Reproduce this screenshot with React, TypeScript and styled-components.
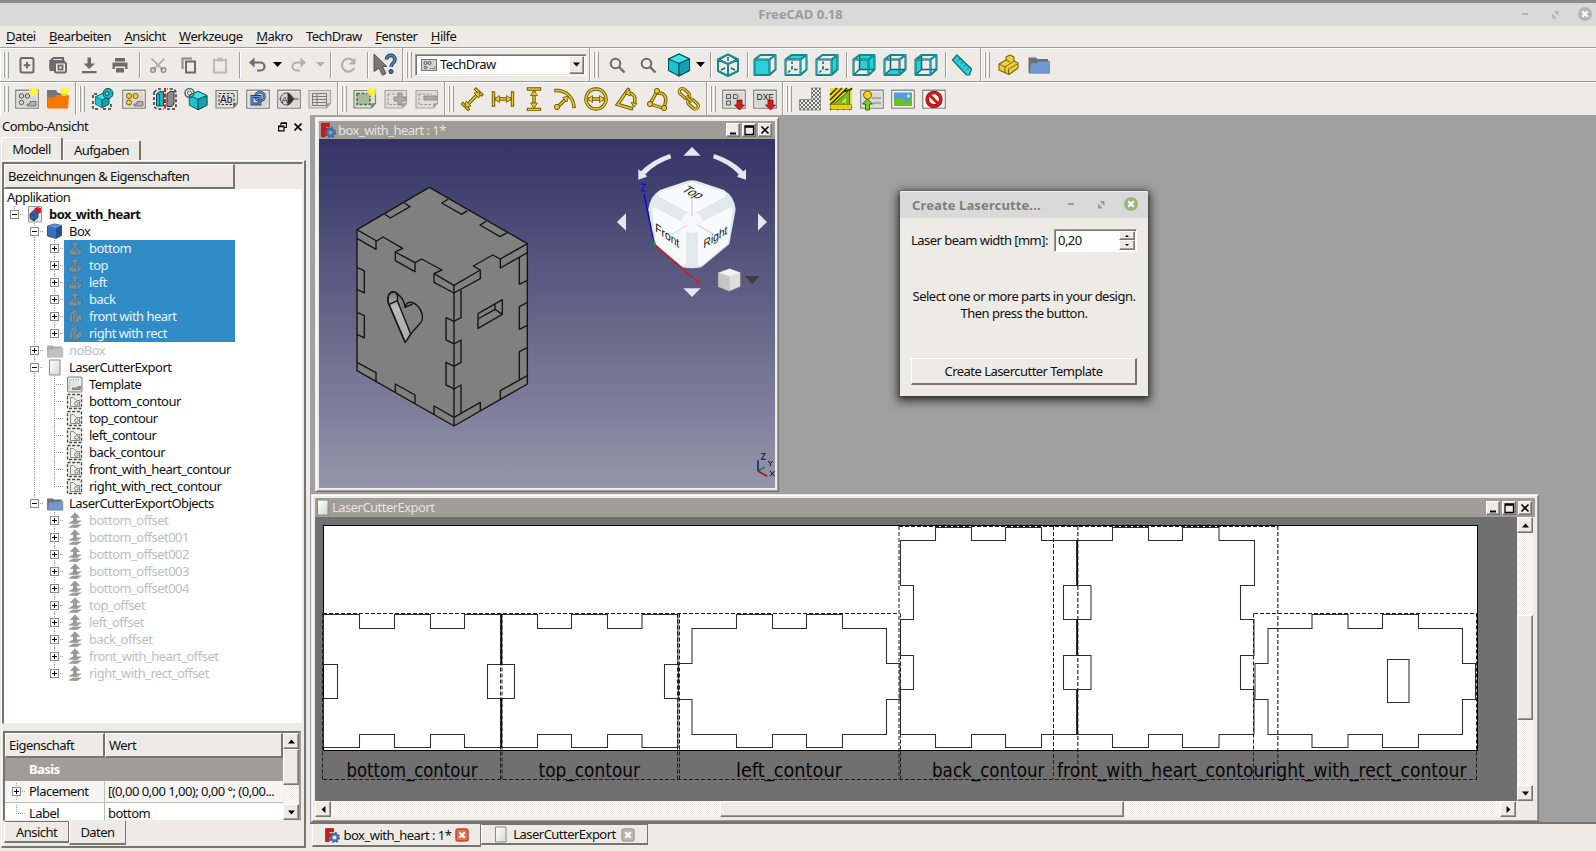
import React from 'react';
import styled, { createGlobalStyle, css } from 'styled-components';

const BG = '#eeebe6';
const MID = '#9f9d98';
const DARK = '#77756f';

const Global = createGlobalStyle`
  *{box-sizing:border-box}
  body{margin:0;overflow:hidden;background:${BG}}
`;

const Shell = styled.div`
  width:1596px;height:851px;display:flex;flex-direction:column;background:${BG};
  font-family:"Noto Sans",sans-serif;font-size:13px;letter-spacing:-.53px;line-height:17px;color:#101010;white-space:nowrap;overflow:hidden;
`;
const TitleBar = styled.div`
  height:26px;flex:none;background:#d9d9d9;border-top:3px solid #8d8d8d;display:grid;letter-spacing:0;
  grid-template-columns:1fr auto 1fr;align-items:center;font-weight:700;color:#9c9c9c;padding-right:2px;padding-left:7px;
`;
const WinCtl = styled.div`
  display:flex;justify-self:end;align-items:center;
`;
const MenuBar = styled.div`
  height:21px;flex:none;display:flex;gap:13.500px;padding:0 0 1px 6px;align-items:center;
  u{text-underline-offset:2px}
`;

const Toolbars = styled.div`
  height:34px;flex:none;display:flex;border-top:1px solid ${MID};box-shadow:inset 0 1px 0 #fff;
`;
const Bar = styled.div<{ $w: number; $last?: boolean }>`
  width:${p => p.$w}px;display:flex;align-items:center;padding:0 0 0 3px;
  ${p => !p.$last && css`border-right:1px solid ${MID};`}
  box-shadow:inset 1px 1px 0 #fff;
`;
const Grip = styled.div`
  width:6px;height:26px;flex:none;margin-right:3px;border:solid ${MID};border-width:0 1px;
  border-left-color:#fff;
  background:linear-gradient(90deg,${MID} 0 1px,${BG} 1px 2px,#fff 2px 3px,${BG} 3px);
`;
const Slot = styled.div<{ $w?: number }>`
  width:${p => p.$w ?? 31}px;flex:none;display:flex;align-items:center;padding-left:3px;
  svg{flex:none;display:block}
`;
const Sep = styled.div<{ $w?: number }>`
  width:${p => p.$w ?? 7}px;height:26px;flex:none;
  &::after{content:'';display:block;width:2px;height:26px;margin-left:3px;background:linear-gradient(90deg,${MID} 50%,#fff 50%)}
`;
const ArrowGap = styled.div<{ $w: number }>`margin-left:${p => p.$w}px;`;
const Combo = styled.div`
  width:172px;height:22px;flex:none;background:#fff;border:1px solid ${MID};border-right-color:#fff;border-bottom-color:#fff;
  box-shadow:inset 1px 1px 0 ${DARK},inset -1px -1px 0 ${BG};display:flex;align-items:center;padding:2px 2px 2px 5px;
  >span{flex:1;margin-left:3px}
`;
const Btn = styled.div<{ $w: number; $h: number }>`
  width:${p => p.$w}px;height:${p => p.$h}px;flex:none;background:${BG};border:1px solid #fff;
  border-right-color:${DARK};border-bottom-color:${DARK};box-shadow:inset -1px -1px 0 ${MID};
  display:flex;align-items:center;justify-content:center;
`;

const Body = styled.div`flex:1;display:flex;min-height:0;`;
const Dock = styled.div`width:310px;flex:none;display:flex;flex-direction:column;padding-right:4px;`;
const DockTitle = styled.div`
  height:23px;flex:none;display:flex;align-items:center;padding:0 4px 0 2px;>span{flex:1}
  svg+svg{margin-left:7px}
`;
const TabRow = styled.div`height:22px;flex:none;display:flex;align-items:flex-end;padding-left:1px;`;
const Tab = styled.div<{ $w: number; $h: number }>`
  width:${p => p.$w}px;height:${p => p.$h}px;display:flex;align-items:center;justify-content:center;
  border:1px solid #fff;border-right:2px solid ${DARK};border-bottom:0;border-radius:2px 2px 0 0;
`;
const Pane = styled.div`
  flex:1;min-height:0;border:solid #fff;border-width:1px 0 0 1px;border-right:2px solid ${DARK};border-bottom:2px solid ${DARK};
  margin:0 0 3px 1px;padding:1px 1px 0 0;display:flex;flex-direction:column;
`;
const Tree = styled.div`
  height:562px;flex:none;background:#fff;border:2px solid ${DARK};border-right:1px solid ${BG};border-bottom:1px solid ${BG};
`;
const TreeHead = styled.div`
  height:25px;background:${BG};display:flex;
`;
const HeadCell = styled.div<{ $w: number }>`
  width:${p => p.$w}px;flex:none;border:1px solid #fff;border-right:2px solid ${DARK};border-bottom:2px solid ${DARK};
  padding:0 0 0 3px;display:flex;align-items:center;
`;
const Row = styled.div`height:17px;display:flex;`;
const Cell = styled.div<{ $k: string }>`
  width:20px;height:17px;flex:none;display:grid;place-items:center;
  ${p => {
    const v = (h: string) => `repeating-linear-gradient(180deg,#9c9c9c 0 1px,transparent 1px 2px) 10px 0/1px ${h} no-repeat`;
    const hz = 'repeating-linear-gradient(90deg,#9c9c9c 0 1px,transparent 1px 2px) 10px 8px/9px 1px no-repeat';
    if (p.$k === 'v') return `background:${v('17px')};`;
    if (p.$k === 't') return `background:${v('17px')},${hz};`;
    if (p.$k === 'l') return `background:${v('9px')},${hz};`;
    return '';
  }}
`;
const Expander = styled.i<{ $open?: boolean }>`
  width:9px;height:9px;border:1px solid #8a8a8a;display:block;margin-left:1px;
  background:linear-gradient(#000,#000) 1px 3px/5px 1px no-repeat,
    ${p => (p.$open ? '' : 'linear-gradient(#000,#000) 3px 1px/1px 5px no-repeat,')} #fff;
`;
const Item = styled.div<{ $sel?: boolean; $dim?: boolean; $bold?: boolean }>`
  height:17px;display:flex;align-items:center;padding-left:2px;
  svg{margin-right:5px;flex:none}
  ${p => p.$sel && css`background:#308cc6;color:#e9f3fa;width:171px;`}
  ${p => p.$dim && css`color:#bebebe;`}
  ${p => p.$bold && css`font-weight:700;`}
`;
const Nudge = styled.i`width:2px;flex:none;`;
const Props = styled.div`
  margin:7px 2px 0 1px;flex:none;height:90px;border:2px solid ${DARK};border-right-color:${MID};border-bottom:1px solid ${BG};display:flex;overflow:hidden;
`;
const PropTable = styled.div`flex:1;min-width:0;`;
const PropRow = styled.div<{ $h: number; $bg?: string }>`
  height:${p => p.$h}px;display:flex;background:${p => p.$bg ?? '#fff'};overflow:hidden;
  border-bottom:1px solid #bdbbb6;
`;
const PropKey = styled.div`
  width:100px;flex:none;display:flex;align-items:center;border-right:1px solid #bdbbb6;padding-left:1px;
  >span{margin-left:3px}
`;
const PropVal = styled.div`display:flex;align-items:center;padding-left:3px;`;
const Basis = styled.div`height:23px;background:${MID};color:#fff;font-weight:700;padding:3px 0 0 24px;`;
const BottomTabs = styled.div`height:24px;flex:none;display:flex;align-items:flex-start;padding-left:2px;`;
const BTab = styled.div<{ $w: number; $h: number; $on?: boolean; $gap?: number }>`
  width:${p => p.$w}px;height:${p => p.$h}px;display:flex;align-items:center;justify-content:center;gap:${p => p.$gap ?? 4}px;
  border-left:1px solid #fff;border-right:1px solid ${DARK};border-bottom:2px solid ${DARK};
  border-top:${p => (p.$on ? '0' : `1px solid ${DARK}`)};background:${BG};padding-top:1px;
`;
const dither = `repeating-conic-gradient(#fff 0 25%,${BG} 0 50%) 0 0/2px 2px`;
const VScroll = styled.div<{ $w: number }>`
  width:${p => p.$w}px;flex:none;display:flex;flex-direction:column;background:${dither};
`;
const HScroll = styled.div`height:16px;width:1201px;flex:none;display:flex;background:${dither};`;
const Spacer = styled.div<{ $n: number }>`flex:${p => p.$n} 0 0;`;

const Mdi = styled.div`flex:1;display:flex;flex-direction:column;min-width:0;`;
const Area = styled.div`flex:1;position:relative;background:#a0a0a0;border-bottom:2px solid ${DARK};`;
const MdiTabs = styled.div`height:27px;flex:none;display:flex;padding-left:2px;`;
const SubWin = styled.div<{ $x: number; $y: number; $w: number; $h: number }>`
  position:absolute;left:${p => p.$x}px;top:${p => p.$y}px;width:${p => p.$w}px;height:${p => p.$h}px;background:${BG};
  border:1px solid ${BG};border-right:1px solid ${DARK};border-bottom:1px solid ${DARK};
  box-shadow:inset 1px 1px 0 #fff,inset -1px -1px 0 ${MID};padding:3px;display:flex;flex-direction:column;
`;
const SubTitle = styled.div<{ $h: number }>`
  height:${p => p.$h}px;flex:none;background:${MID};color:#e6e4df;display:flex;align-items:center;padding:0 3px 0 1px;gap:2px;
  >span{flex:1}
`;
const CtlRow = styled.div`display:flex;gap:2px;`;
const PageView = styled.div`display:flex;height:284px;flex:none;`;
const Canvas = styled.div`width:1202px;height:284px;background:#707070;flex:none;svg{display:block}`;

const Dialog = styled.div`
  position:absolute;left:590px;top:76px;width:248px;height:205px;background:${BG};border-radius:2px 2px 0 0;
  box-shadow:0 3px 10px 3px rgba(0,0,0,.55),0 1px 4px rgba(0,0,0,.5);display:flex;flex-direction:column;
`;
const DialogTitle = styled.div`
  height:27px;flex:none;background:#d9d9d9;border-top:1px solid #f2f2f2;border-radius:2px 2px 0 0;color:#7e7e7e;font-weight:700;
  display:flex;align-items:center;padding:1px 8px 0 12px;letter-spacing:.12px;>span{flex:1}
`;
const DialogBody = styled.div`flex:1;padding:11px 11px 11px;display:flex;flex-direction:column;`;
const Field = styled.div`display:flex;align-items:center;justify-content:space-between;height:23px;`;
const Spin = styled.div`
  width:83px;flex:none;height:23px;background:#fff;border:1px solid ${MID};border-right-color:#fff;border-bottom-color:#fff;
  box-shadow:inset 1px 1px 0 ${DARK};display:flex;padding:1px 1px 1px 3px;align-items:center;>span{flex:1}
`;
const Col = styled.div`display:flex;flex-direction:column;`;
const Hint = styled.div`text-align:center;margin-top:36px;`;
const PushButton = styled.div`
  margin-top:auto;height:27px;border:1px solid #fff;border-right:2px solid ${DARK};border-bottom:2px solid ${DARK};
  display:flex;align-items:center;justify-content:center;
`;

/* ---------- glyphs ---------- */
const Ic = ({ children, s = 24 }: { children: React.ReactNode; s?: number }) => (
  <svg width={s} height={s} viewBox="0 0 24 24" fill="none">{children}</svg>
);
const G = '#6b6b6b';
const LG = '#b3b1ad';
const Tri = ({ d = 'down', c = '#000', s = 9 }: { d?: string; c?: string; s?: number }) => (
  <svg width={s} height={s} viewBox="0 0 9 9" fill={c}>
    <path d={d === 'down' ? 'M0 2h9L4.500 7z' : d === 'up' ? 'M0 7h9L4.500 2z' : d === 'left' ? 'M7 0v9L2 4.500z' : 'M2 0v9L7 4.500z'} />
  </svg>
);
const Min = () => <svg width="12" height="12"><path d="M3 9.500h6" stroke="#000" strokeWidth="2" /></svg>;
const Max = () => <svg width="12" height="12"><path d="M2 2h8.500v8.500H2zM2 3h8.500" stroke="#000" fill="none" strokeWidth="1.300" /></svg>;
const Cls = () => <svg width="12" height="12"><path d="M2.500 2.500l7 7M9.500 2.500l-7 7" stroke="#000" strokeWidth="1.600" /></svg>;

const FcLogo = ({ s = 16 }: { s?: number }) => (
  <svg width={s} height={s} viewBox="0 0 16 16">
    <path d="M1.500 1.500h8v3.200h-4.300v2h3v3h-3v5h-3.700z" fill="#cc1a1a" stroke="#7e1111" strokeWidth=".6" />
    <circle cx="10.500" cy="10.500" r="3.300" fill="none" stroke="#4470ae" strokeWidth="2.400" />
    <circle cx="10.500" cy="10.500" r="4.800" fill="none" stroke="#34588f" strokeWidth="1.400" strokeDasharray="1.900 1.870" />
  </svg>
);
const PageIcon = () => (
  <svg width="14" height="17" viewBox="0 0 14 17"><defs><linearGradient id="pg" x1="0" y1="0" x2="1" y2="1"><stop stopColor="#fff" /><stop offset="1" stopColor="#d3d9d0" /></linearGradient></defs>
    <path d="M1.500 1h10.500v15h-10.500z" fill="url(#pg)" stroke="#8a8a86" /></svg>
);
const Folder = ({ s = 16, a = '#6f9bd1', b = '#6b6f76' }: { s?: number; a?: string; b?: string }) => (
  <svg width={s} height={s} viewBox="0 0 16 16"><path d="M1 3h5l1 1h7v9H1z" fill={b} /><path d="M2.500 6.500h4l1-1H15v8H1.500z" fill={a} stroke={b} strokeWidth=".4" /></svg>
);
const DocIcon = () => (
  <svg width="18" height="17" viewBox="0 0 18 17"><path d="M2.500.5h13v15.500h-13z" fill="#e6e6e6" stroke="#999" /><path d="M4 8l3.500-3.500L12 6v5.500L8 15l-4-2.500z" fill="#3a65a8" stroke="#16294c" strokeWidth=".8" /><path d="M8 15V9l4-3M8 9L4 8" stroke="#16294c" strokeWidth=".6" fill="none" /><path d="M8 3l3-2 4 1v4.500l-3 1.500-1-2.500-3-1z" fill="#d2202c" /></svg>
);
const BlueBox = () => (
  <svg width="18" height="17" viewBox="0 0 18 17"><path d="M1.500 3l7-2 7 1.500v10L10 15.500 1.500 13z" fill="#3b6fb6" stroke="#1b3b69" strokeWidth=".8" /><path d="M10 5v10.500l5.500-3V2.500z" fill="#28528d" /><path d="M1.500 3l7-2 7 1.500L10 5z" fill="#5d90d0" /></svg>
);
const PadIcon = () => (
  <svg width="18" height="17" viewBox="0 0 18 17" stroke="#4d6f86" strokeWidth=".8" fill="#6f91a8"><path d="M2.500 9.500l4-2 9 1v4.500L11 16l-8.500-1.500z" /><path d="M2.500 9.500l8.500 1.500v5M11 11l4.500-2.500" fill="none" /><path d="M7.500 9V5.500H4.500L9 .8l4.500 4.700H10.500V9z" /></svg>
);
const CutIcon = () => (
  <svg width="18" height="17" viewBox="0 0 18 17" stroke="#4d6f86" strokeWidth=".8" fill="#6f91a8"><path d="M3 5l6-4 3 1.500v3L9 9l5-3 2 1.500v4L9 16l-6-3z" /><path d="M3 5l3.500 2v8M6.500 7L12 2.500M9 9v7" fill="none" /></svg>
);
const OffIcon = () => (
  <svg width="18" height="17" viewBox="0 0 18 17" fill="#9b9b98"><path d="M2 15.500l5-3h9l-5 3.500z" /><path d="M2 11.500l5-3h9l-5 3.500z" /><path d="M7.500 9V5.500H4.500L9 .8l4.500 4.700H10.500V9z" stroke="#8a8a88" strokeWidth=".6" /></svg>
);
const TplIcon = () => (
  <svg width="18" height="17" viewBox="0 0 18 17"><rect x="1.500" y="1" width="14.500" height="15" rx="1" fill="#e4e4e2" stroke="#7d7d7b" /><path d="M3.500 3h10.500v9" stroke="#fff" fill="none" /><path d="M3.500 12.500V3.500h10" stroke="#999" strokeDasharray="1 1.500" fill="none" /><path d="M6 14h9v-4h-3l-1 1.500H6z" fill="#8b8b89" /></svg>
);
const ViewIcon = () => (
  <svg width="18" height="17" viewBox="0 0 18 17" fill="none"><rect x="1.500" y="1.500" width="14" height="14" stroke="#444" strokeWidth="1.300" strokeDasharray="3 1.670" fill="#efefed" /><path d="M4.500 4.500v9h9V7.500h-3l-3-3z" stroke="#888" /><circle cx="10.500" cy="10.500" r="1.800" stroke="#777" /></svg>
);

const C1 = '#27d3d8';
const CE = '#0c6f78';
const WireCube = ({ f, r, t, k }: { f?: string; r?: string; t?: string; k?: string }) => (
  <Ic>
    {k && <path d={k} fill={C1} />}
    {f && <path d="M1.500 6.500h15v15.500h-15z" fill={f} />}
    {t && <path d="M1.500 6.500l6-4.500h15l-6 4.500z" fill={t} />}
    {r && <path d="M16.500 6.500l6-4.500v14.500l-6 5.500z" fill={r} />}
    {!f && !k && <path d="M8 8.500v2.500M8 13v3.500M6.500 17.500l-2.500 2M10 16.500h3.500" stroke="#0f6a72" strokeWidth="1.600" />}
    {k && <path d="M7.500 2v14.500h15M7.500 16.500l-6 5.500" stroke="#0f6a72" strokeWidth="1.500" />}
    <path d="M1.500 6.500h15v15.500h-15zM1.500 6.500l6-4.500h15l-6 4.500M22.500 2v14.500l-6 5.500" stroke={CE} strokeWidth="2" strokeLinejoin="round" />
    <path d="M1.500 6.500h15v15.500h-15zM1.500 6.500l6-4.500h15l-6 4.500M22.500 2v14.500l-6 5.500" stroke="#25b5bc" strokeWidth=".7" />
  </Ic>
);
const Glow = () => <><circle cx="18.500" cy="4.500" r="4.800" fill="#fbf34a" opacity=".7" /><circle cx="18.500" cy="4.500" r="2.800" fill="#fffb20" /></>;
const Sheet = ({ children, star, c = '#d6d6d4' }: { children?: React.ReactNode; star?: boolean; c?: string }) => (
  <Ic>
    <rect x=".8" y="3.200" width="22.400" height="17.900" fill={c} stroke="#7b7b79" strokeWidth="1.200" />
    <rect x="2" y="4.500" width="20" height="15.500" stroke="#f4f4f4" strokeWidth=".8" />
    {children}
    {star && <Glow />}
  </Ic>
);
const Note = ({ children, star, dim }: { children?: React.ReactNode; star?: boolean; dim?: boolean }) => (
  <Ic>
    <path d="M1 3.500h21.500v13l-4 4.500H1z" fill={dim ? '#dfddd9' : '#dededc'} stroke={dim ? '#a9a7a3' : '#82827f'} strokeWidth="1.200" />
    <path d="M18 21l.5-4.500 4-.5z" fill={dim ? '#9d9b98' : '#777774'} />
    {children}
    {star && <Glow />}
  </Ic>
);
const YO = '#6d5606';
const YF = '#e8cc2c';
const Gold = ({ d, children }: { d: string; children?: React.ReactNode }) => (
  <Ic>
    <path d={d} stroke={YO} strokeWidth="3.400" strokeLinecap="square" />
    <path d={d} stroke={YF} strokeWidth="1.500" strokeLinecap="square" />
    {children}
  </Ic>
);
const Dot = ({ x, y }: { x: number; y: number }) => <circle cx={x} cy={y} r="2.600" fill={YF} stroke={YO} />;
const Ruler = () => (
  <Ic><path d="M2.500 7l4.500-5 14.500 14-2 6h-3z" fill="#25cfd6" stroke={CE} strokeWidth="1.200" strokeLinejoin="round" /><path d="M10 5.500l-2 2M13 8.500l-2 2M16 11.500l-2 2M19 14.500l-2 2" stroke={CE} /></Ic>
);
const RedArrow = () => <path d="M15 13h5v5h2.500L17.500 23l-5-5H15z" fill="#d81b1b" stroke="#7a0c0c" strokeWidth=".8" />;
const SolidCube = ({ x = 0, y = 0, k = 1 }: { x?: number; y?: number; k?: number }) => (
  <g transform={`translate(${x} ${y}) scale(${k})`} stroke="#0a4f57" strokeWidth="1.100" strokeLinejoin="round">
    <path d="M1.500 6L12 1l10.500 5v11.500L12 23 1.500 17.500z" fill="#1bc3ce" /><path d="M1.500 6L12 1l10.500 5L12 10.500z" fill="#3be5e8" /><path d="M12 10.500V23" />
    <path d="M12 10.500L22.500 6v11.500L12 23z" fill="#12a2b2" />
  </g>
);

const I = {
  neu: <Ic><rect x="5.500" y="5" width="13" height="14.500" rx="1.500" stroke={G} strokeWidth="2" /><path d="M12 9v6.500M8.800 12.200h6.500" stroke={G} strokeWidth="2" /></Ic>,
  open: <Ic><path d="M4.500 16V8l3-3h9.500v3" stroke={G} strokeWidth="2.200" /><path d="M3.500 7h15v2.500H8.500V18H3.500z" fill={G} /><rect x="9" y="9.500" width="11" height="10" rx="1.500" fill={BG} stroke={G} strokeWidth="2" /><rect x="12.500" y="12.500" width="4" height="4" stroke={G} strokeWidth="1.800" /></Ic>,
  save: <Ic><path d="M10.500 4.500h3.500v6h4L12.200 16 6.500 10.500h4zM5 18h14.500v2.300H5z" fill={G} /></Ic>,
  print: <Ic><path d="M7 5h10v3.500H7zM4.500 9.500h15V16h-2.500v-2.500H7V16H4.500zM8 15h8v4.500H8z" fill={G} /></Ic>,
  cut: <Ic><path d="M5.500 5.500L17 17M18.500 5.500L7 17" stroke={LG} strokeWidth="1.800" /><circle cx="7" cy="17" r="2.300" stroke="#8f8d89" strokeWidth="1.500" /><circle cx="17.500" cy="17" r="2.300" stroke="#8f8d89" strokeWidth="1.500" /></Ic>,
  copy: <Ic><path d="M5.500 16V5.500H15" stroke="#8b8986" strokeWidth="2" /><path d="M9 8.500h9v11H9z" stroke={G} strokeWidth="2" /></Ic>,
  paste: <Ic><path d="M6 7h12v12.500H6z" stroke="#bcbab5" strokeWidth="2" /><path d="M9.500 4.500h5v4h-5z" fill="#bcbab5" /></Ic>,
  undo: <Ic><path d="M6 9.500h8.500a4 4 0 0 1 0 8H11" stroke={G} strokeWidth="2.200" /><path d="M3 9.500L8.500 4.500v10z" fill={G} /></Ic>,
  redo: <Ic><path d="M17 9.500H9.500a4 4 0 0 0 0 8H13" stroke={LG} strokeWidth="2.200" /><path d="M19 9.500L13.500 4.500v10z" fill={LG} /></Ic>,
  refresh: <Ic><path d="M17.500 8A6.500 6.500 0 1 0 18.300 15" stroke={LG} strokeWidth="2.200" /><path d="M19.500 4.500v7h-7z" fill={LG} /></Ic>,
  what: <Ic><path d="M1 1l13 12.500h-4.500l3.500 7-3.500 1.700-3.500-7L1 18.500z" fill="#787878" stroke="#3e3e3e" strokeWidth=".8" /><path d="M13.500 6.500c0-5.500 8.500-5.500 8.500 0 0 3.500-4 3.500-4 7.500" stroke="#1d3c68" strokeWidth="3.600" /><path d="M13.500 6.500c0-5.500 8.500-5.500 8.500 0 0 3.500-4 3.500-4 7.500" stroke="#5583bd" strokeWidth="1.700" /><circle cx="18" cy="18.500" r="2.100" fill="#3f6da8" stroke="#1d3c68" /></Ic>,
  mag: <Ic><circle cx="10.500" cy="10.500" r="4.800" stroke={G} strokeWidth="2" /><path d="M14 14l5.500 5.500" stroke={G} strokeWidth="2.400" /></Ic>,
  cube: <Ic><SolidCube /></Ic>,
  iso: <Ic><path d="M12 1.500l10 5V18l-10 5-10-5V6.500zM2 6.500l10 4.500 10-4.500M12 11v12" stroke={CE} strokeWidth="2" strokeLinejoin="round" /><path d="M12 1.500l10 5V18l-10 5-10-5V6.500zM2 6.500l10 4.500 10-4.500M12 11v12" stroke="#25b5bc" strokeWidth=".7" /><path d="M12 4v4M5 17l4-2M19 17l-4-2" stroke="#0f6a72" strokeWidth="1.500" /></Ic>,
  part: <Ic><path d="M3 11l7-4V4l4-2 4 2v4l4 2v5l-9 6.500L3 17z" fill="#f0cf3b" stroke="#7d6108" strokeWidth="1.100" strokeLinejoin="round" /><path d="M3 11l6 3v6M9 14l9-6M10 7l4 2M12.500 21.500V16l9-5" stroke="#7d6108" /></Ic>,
  newpage: <Sheet star><circle cx="6.500" cy="9" r="2.200" stroke="#555" /><circle cx="12.500" cy="9" r="2.200" stroke="#555" /><circle cx="6.500" cy="15.500" r="2.200" stroke="#555" /><path d="M12 19v-2h3v-2.500h6V19z" fill="#b2b2b0" stroke="#666" strokeWidth=".8" /></Sheet>,
  ofolder: <Ic><path d="M1 3h9l2 3h9v14H1z" fill="#767674" /><path d="M1.500 10.500h7l2-2.500H23l-1 13.500H1.500z" fill="#f57900" /><Glow /></Ic>,
  view: <Ic><path d="M2 11V7h6M2 14v8h7M12 22h8v-5" stroke="#333" strokeWidth="1.500" strokeDasharray="3 2" /><SolidCube x={3.5} y={6} k={0.64} /><circle cx="17" cy="6.500" r="5" fill="#16b5c0" stroke="#0a4f57" /><circle cx="16" cy="6.500" r="2" stroke="#0a4f57" fill="#4fd9de" /></Ic>,
  group: <Sheet><circle cx="7" cy="9" r="2.500" fill="#f4d51e" stroke="#7d6108" /><circle cx="13.500" cy="9" r="2.500" fill="#f4d51e" stroke="#7d6108" /><circle cx="7" cy="15.500" r="2.500" fill="#f4d51e" stroke="#7d6108" /><path d="M12 19v-2h3v-2.500h6V19z" fill="#b2b2b0" stroke="#666" strokeWidth=".8" /></Sheet>,
  section: <Ic><path d="M1 5v15M1 5l4-3h5M1 20l3 2h7M14 22h8l1-3V5l-2-3h-7" stroke="#333" strokeWidth="1.500" strokeDasharray="3 2" /><path d="M3.500 7l3-2.500h4V19h-7z" fill="#19b7c3" stroke="#0a4f57" /><path d="M6.500 7.500V19M3.500 7h3" stroke="#0a4f57" /><path d="M14 7l3-2.500h4V17l-2 2.500h-5z" fill="#8b8e8c" stroke="#333" /><path d="M12 1v22" stroke="#e01616" strokeWidth="2" strokeDasharray="4 1.500" /></Ic>,
  detail: <Ic><SolidCube x={4} y={3.5} k={0.84} /><circle cx="5.500" cy="6" r="4.500" stroke="#4a6668" strokeWidth="1.500" /><circle cx="5.500" cy="6" r="2" stroke="#4a6668" /></Ic>,
  anno: <Note><rect x="4" y="6.500" width="15" height="11" stroke="#333" strokeDasharray="2.500 1.500" /><text x="5" y="16" fontSize="10" fill="#111" fontFamily="Liberation Sans" letterSpacing="0">Ab</text></Note>,
  draft: <Sheet><circle cx="14" cy="9.500" r="4.300" stroke="#1d3c78" strokeWidth="2.800" /><circle cx="14" cy="9.500" r="4.300" stroke="#6f9ad4" strokeWidth="1.200" /><path d="M6 9.500h8v7.500H6z" stroke="#1d3c78" strokeWidth="2.800" /><path d="M6 9.500h8v7.500H6z" stroke="#6f9ad4" strokeWidth="1.200" /></Sheet>,
  arch: <Sheet><circle cx="9.500" cy="12" r="6" stroke="#555" /><path d="M10.500 5v14l7-7z" fill="#333" /><text x="4.500" y="15.500" fontSize="9.500" fill="#111" fontFamily="Liberation Sans">A</text><path d="M17 12h5M2 12h2" stroke="#555" /></Sheet>,
  sheet: <Note dim><path d="M4.500 6.500h14v12h-14zM4.500 9.500h14M4.500 12.500h14M4.500 15.500h14M9 6.500v12" stroke="#7f7d7a" /></Note>,
  clip: <Note star><rect x="4" y="6.500" width="13" height="11" fill="#a9b9a2" stroke="#3d7a2a" strokeWidth="1.600" strokeDasharray="3 1.500" /></Note>,
  clipp: <Note dim><path d="M4 7h9M4 7v10.500h10" stroke="#999" strokeWidth="1.200" strokeDasharray="2.500 1.500" /><path d="M14 6h4v4h4v4h-4v4h-4v-4h-4v-4h4z" fill="#aaa9a6" stroke="#8f8d8a" /></Note>,
  clipm: <Note dim><path d="M4 7h13M4 7v10.500h13" stroke="#999" strokeWidth="1.200" strokeDasharray="2.500 1.500" /><path d="M9 9h13v4H9z" fill="#aaa9a6" stroke="#8f8d8a" /></Note>,
  len: <Gold d="M3 17l5 5M16 2.500l5.500 5M7 18L18 7"><path d="M5 20l1-6 5 5zM20 5l-6 1 5 5z" fill={YF} stroke={YO} strokeWidth=".8" /></Gold>,
  hor: <Gold d="M2.500 6v12M21.500 6v12M6 12h12"><path d="M3.500 12l5-3.500v7zM20.500 12l-5-3.500v7z" fill={YF} stroke={YO} strokeWidth=".8" /></Gold>,
  ver: <Gold d="M6.500 2h11M6.500 22.500h11M12 6v12"><path d="M12 3.500L8.500 8.500h7zM12 21l-3.500-5h7z" fill={YF} stroke={YO} strokeWidth=".8" /></Gold>,
  rad: <Gold d="M3 3.500c9-.5 17 6 18 16M5 19.500L13 12"><path d="M15.500 9l-6 1.500 4.500 4.500z" fill={YF} stroke={YO} strokeWidth=".8" /><Dot x={4} y={20} /></Gold>,
  dia: <Gold d="M12 2a10 10 0 1 0 .01 0M6 12h12"><path d="M3.500 12l5-3.500v7zM20.500 12l-5-3.500v7z" fill={YF} stroke={YO} strokeWidth=".8" /></Gold>,
  ang: <Gold d="M13 2.500L2.500 17.500l14 4M13 6c6 0 8.500 5 6 11.500"><path d="M10 6l5-3.500v6.500zM19 20l-3-4.500 6 1z" fill={YF} stroke={YO} strokeWidth=".8" /></Gold>,
  ang3: <Gold d="M11 4.500L4 17l13 4M13 6c6 0 8 5 6 11.500"><Dot x={11} y={4} /><Dot x={4} y={17} /><Dot x={18} y={21} /></Gold>,
  link: <Ic>{[[7.5, 6.5], [16, 17]].map(([x, y]) => <g key={x} transform={`rotate(42 ${x} ${y})`}><rect x={x - 6} y={y - 3} width="12" height="6" rx="3" stroke={YO} strokeWidth="3.200" /><rect x={x - 6} y={y - 3} width="12" height="6" rx="3" stroke={YF} strokeWidth="1.400" /></g>)}<path d="M9 9l6 6" stroke={YO} strokeWidth="3.200" /><path d="M9 9l6 6" stroke={YF} strokeWidth="1.400" /></Ic>,
  svg: <Sheet><path d="M4.500 7.500h4v4h-4zM4.500 14h4v4h-4z" stroke="#555" /><path d="M11.500 7.500h2.500a2 2 0 0 1 0 4h-2.500z" stroke="#555" /><RedArrow /></Sheet>,
  dxf: <Sheet><text x="3.500" y="12.500" fontSize="8.500" fill="#222" fontFamily="Liberation Sans" textLength="17" letterSpacing="0">DXF</text><RedArrow /></Sheet>,
  hatch: <Ic><defs><pattern id="xh" width="4" height="4" patternUnits="userSpaceOnUse"><rect width="4" height="4" fill="#f1f1ef" /><path d="M0 0l4 4M4 0L0 4" stroke="#444" strokeWidth=".8" /></pattern></defs><path d="M13.500 1h9v22h-21V12.500h12z" fill="url(#xh)" stroke="#777" strokeWidth=".7" /></Ic>,
  geoh: <Ic><rect x="1" y="1" width="22" height="22" fill="#f2dc12" /><path d="M1 8l7-7M1 13L13 1M1 18L18 1M1 23L23 1M14 5l9-3M8 23l3-3M14 23l3-3M20 23l3-3" stroke="#2b2900" strokeWidth="1.500" /><path d="M3 18.500L20.500 3v15.500z" fill="#73b82c" stroke="#3d6a10" /><path d="M12 15.500h5v-5z" fill="#f2dc12" /><path d="M1.500 17.500h21v5h-21z" fill="#e5d215" stroke="#7a6c04" strokeWidth=".6" /></Ic>,
  sym: <Sheet><path d="M12 11h9M13 16h8" stroke="#aaa" strokeWidth="2" /><circle cx="7.500" cy="8" r="4" fill="#f6d420" stroke="#7d6108" /><path d="M5.500 23v-6H2.500l5-5 5 5H9.500v6z" fill="#73d216" stroke="#2f6a08" /></Sheet>,
  img: <Sheet c="#f2f2f0"><rect x="3" y="5.500" width="18" height="13.500" fill="#4f9be8" /><path d="M3 13c4-3 6-2 9 0s6 0 9-2v8H3z" fill="#6ac31c" /><circle cx="17.500" cy="9" r="1.700" fill="#fce94f" /></Sheet>,
  no: <Sheet c="#f2f2f0"><circle cx="12" cy="12.300" r="6.800" stroke="#7d0a0a" strokeWidth="3.600" /><circle cx="12" cy="12.300" r="6.800" stroke="#d41919" strokeWidth="2.600" /><path d="M7.500 8l9 9" stroke="#d41919" strokeWidth="2.800" /></Sheet>,
};
type K = keyof typeof I;
const S = ({ k }: { k: K }) => <Slot>{I[k]}</Slot>;
const Many = ({ ks }: { ks: K[] }) => <>{ks.map((k, i) => <S key={i} k={k} />)}</>;

const CtlSvg = styled.svg<{ $up: number }>`margin-top:-${p => p.$up}px;`;
const WinButtons = ({ color, close, up = 0 }: { color: string; close: string; up?: number }) => (
  <CtlSvg width="76" height="16" viewBox="0 0 76 16" $up={up}>
    <path d="M4 8h6" stroke={color} strokeWidth="2" />
    <path d="M34 7.500v5h5zM35.500 5h5v5z" fill={color} />
    <circle cx="67" cy="8" r="7" fill={close} />
    <path d="M64.200 5.200l5.600 5.600M69.800 5.200l-5.600 5.600" stroke="#fff" strokeWidth="2" />
  </CtlSvg>
);

/* ---------- tree ---------- */
type Node = { c: string; x?: 'o' | 'c'; icon: React.ReactNode; t: string; sel?: boolean; dim?: boolean; bold?: boolean };
const pads = ['bottom', 'top', 'left', 'back'];
const contours = ['bottom', 'top', 'left', 'back', 'front_with_heart', 'right_with_rect'];
const offsets = ['bottom_offset', 'bottom_offset001', 'bottom_offset002', 'bottom_offset003', 'bottom_offset004', 'top_offset', 'left_offset', 'back_offset', 'front_with_heart_offset', 'right_with_rect_offset'];
const nodes: Node[] = [
  { c: 'l', x: 'o', icon: <DocIcon />, t: 'box_with_heart', bold: true },
  { c: ' t', x: 'o', icon: <BlueBox />, t: 'Box' },
  ...pads.map((t): Node => ({ c: ' vt', x: 'c', icon: <PadIcon />, t, sel: true })),
  { c: ' vt', x: 'c', icon: <CutIcon />, t: 'front with heart', sel: true },
  { c: ' vl', x: 'c', icon: <CutIcon />, t: 'right with rect', sel: true },
  { c: ' t', x: 'c', icon: <Folder s={18} a="#c4c1bd" b="#aeaba8" />, t: 'noBox', dim: true },
  { c: ' t', x: 'o', icon: <><Nudge /><PageIcon /><Nudge /></>, t: 'LaserCutterExport' },
  { c: ' vt', icon: <TplIcon />, t: 'Template' },
  ...contours.map((t, i): Node => ({ c: i === 5 ? ' vl' : ' vt', icon: <ViewIcon />, t: t + '_contour' })),
  { c: ' l', x: 'o', icon: <Folder s={18} />, t: 'LaserCutterExportObjects' },
  ...offsets.map((t, i): Node => ({ c: i === 9 ? '  l' : '  t', x: 'c', icon: <OffIcon />, t, dim: true })),
];
const TreeLabel = styled.div`height:17px;padding-left:3px;`;

/* ---------- drawings ---------- */
const SceneSvg = styled.svg`display:block;`;
const Scene = () => (
  <SceneSvg width="456" height="349" viewBox="319 139 456 349">
    <defs>
      <linearGradient id="sky" x1="0" y1="0" x2="0" y2="1"><stop stopColor="#333366" /><stop offset="1" stopColor="#9595ab" /></linearGradient>
      <linearGradient id="hb" x1="0" y1="0" x2="0" y2="1"><stop stopColor="#777" /><stop offset=".3" stopColor="#b9b9b9" /><stop offset="1" stopColor="#adadad" /></linearGradient>
    </defs>
    <rect x="319" y="139" width="456" height="349" fill="url(#sky)" />
    <g transform="translate(310 115) scale(.33333)" fill="none" stroke="#161616" strokeWidth="4.200" strokeLinejoin="round">
      <path d="M358 217L652 386V807L432 933L141 767V344Z" fill="#808080" />
      <path d="M225 298L241 309L300 275L283 264M414 253L395 264L455 298L472 287M528 319L510 330L570 365L593 352" />
      <path d="M141 344L200 378L219 366L278 400L256 411L315 443L335 432L396 465L372 476L432 511L511 465L490 453L548 420L571 432L652 386" />
      <path d="M141 370L198 403V378M256 411V437L315 470V443M372 476V502L432 534L511 491V465M571 432V459L652 413" />
      <path d="M432 511V933M628 426V508L652 496M652 562L628 575V643L652 631M652 698L628 710V796M652 782L571 827V853M511 888V862L432 907" />
      <path d="M453 525V608L432 619L408 608V675L432 687L453 675V742L432 754L408 742V810L432 822L453 810V893" />
      <path d="M141 457L163 468V534L141 523M141 592L163 602V669L141 658M141 742L198 773V799M256 831V807L315 840V865M372 898V873L432 907" />
      <path d="M504 596L577 554V598L504 640ZM504 612L555 583L577 598M555 567V583" />
      <path d="M285 682L235 565C228 535 245 525 258 533C275 545 284 563 285 577C290 555 310 560 322 572C340 590 340 612 333 622L302 657Z" />
      <path d="M236 565C230 540 242 528 256 532C264 540 264 548 262 557L302 657L286 682Z" fill="url(#hb)" />
      <path d="M240 567L262 557M285 577L308 567" />
    </g>
    <g transform="translate(600 140) scale(.33333)">
      <g fill="#e1e8ee">
        <path d="M250 47L276 21L302 47ZM250 445h52L276 471ZM78 220V272L51 246ZM474 220V272L501 246Z" />
        <path d="M210 42L214 55Q165 72 136 103L141 110L115 119V88L123 94Q158 58 210 42ZM342 42L339 55Q388 72 416 103L411 110L438 119V88L430 94Q395 58 342 42Z" />
      </g>
      <path d="M258 124Q276 118 294 124L372 150Q404 170 407 208L388 312L304 382Q276 388 248 382L160 310L145 208Q150 168 180 150Z" fill="#e1e8ee" />
      <path d="M276 127L366 154Q385 162 375 170L298 212Q276 222 254 212L178 170Q170 162 188 154ZM157 207Q160 198 172 206L246 246Q258 254 258 268V366Q256 380 244 374L168 310ZM398 207Q394 198 382 206L306 246Q294 254 294 268V366Q296 380 308 374L384 310Z" fill="#f9fafd" />
      <circle cx="276" cy="247" r="32" fill="#f6f8fb" />
      <path d="M276 176V228" stroke="#d4d0dc" strokeWidth="4" /><path d="M262 256L190 298" stroke="#cfe8d2" strokeWidth="4" /><path d="M292 255L365 296" stroke="#d4d0dc" strokeWidth="4" />
      <g fontFamily="Liberation Sans" fontSize="37" fill="#111" letterSpacing="0">
        <text transform="matrix(.87 .42 -.95 .6 255 144)" x="0" y="14">Top</text>
        <text transform="matrix(.83 .58 0 1 166 274)">Front</text>
        <text transform="matrix(.83 -.52 -.05 1 310 326)">Right</text>
      </g>
      <path d="M132 162L163 312" stroke="#0404f0" strokeWidth="4" /><path d="M163 312L276 412" stroke="#e01010" strokeWidth="4" />
      <circle cx="164" cy="311" r="4" fill="#00c000" />
      <path d="M123 133H137L123 153H138" stroke="#0404f0" strokeWidth="3" fill="none" />
      <path d="M285 415L300 435M300 415L285 435" stroke="#f01010" strokeWidth="3" />
      <path d="M389 386L422 398V440L389 454L355 440V398Z" fill="#dedede" stroke="#777" strokeWidth="3" /><path d="M355 398L389 409L422 398L389 386Z" fill="#f2f2f2" /><path d="M355 398L389 409V454L355 440Z" fill="#c6c6c6" />
      <path d="M435 409H478L457 432Z" fill="#3b3b3b" />
    </g>
    <g transform="translate(310 115) scale(.33333)" fill="none" strokeWidth="5">
      <path d="M1344 1068V1036" stroke="#20208c" /><path d="M1344 1068L1364 1056" stroke="#1d7f28" /><path d="M1344 1068L1372 1084" stroke="#9b1c1c" />
      <path d="M1354 1016H1366L1354 1033H1367M1375 1038L1381 1046L1388 1038M1381 1046V1054M1380 1068L1394 1084M1394 1068L1380 1084" stroke="#111" strokeWidth="3" />
    </g>
  </SceneSvg>
);

const labels: [string, number, number][] = [
  ['bottom_contour', 346.5, 131], ['top_contour', 538.5, 101.5], ['left_contour', 736, 106],
  ['back_contour', 932, 112.5], ['front_with_heart_contour', 1057, 214.5], ['right_with_rect_contour', 1264.5, 202],
];
const Drawing = () => (
  <svg width="1202" height="284" viewBox="315 517 1202 284">
    <rect x="323.500" y="525.500" width="1154" height="225" fill="#fff" stroke="#000" />
    <g fill="none" stroke="#2e2e2e" strokeWidth="1.050">
      <path d="M323.500 614.500H359.500V628.500H394.500V614.500H430.500V628.500H464.500V614.500H501V664.500H487.500V698.500H501V747.500H464.500V734.500H430.500V747.500H394.500V734.500H359.500V747.500H323.500V698.500H337.500V664.500H323.500Z" />
      <path d="M501 614.500H537.500V628.500H571.500V614.500H607.500V628.500H642V614.500H678V664.500H664.500V698.500H678V747.500H642V734.500H607.500V747.500H571.500V734.500H537.500V747.500H501V698.500H514.500V664.500H501Z" />
      <path d="M678.500 663.500H692V628.500H736.500V614.500H772.500V628.500H806.500V614.500H842.500V628.500H886.500V663.500H900V699.500H886.500V734.500H842.500V747.500H806.500V734.500H772.500V747.500H736.500V734.500H692V699.500H678.500Z" />
      <path d="M900.500 540.500H935.500V527.500H971.500V540.500H1005.500V527.500H1041.500V540.500H1077V585.500H1063.500V619.500H1077V655.500H1063.500V689.500H1077V734.500H1041.500V747.500H1005.500V734.500H971.500V747.500H935.500V734.500H900.500V689.500H913.500V655.500H900.500V619.500H913.500V585.500H900.500Z" />
      <path d="M1077 540.500H1112.500V527.500H1148.500V540.500H1182.500V527.500H1219V540.500H1254.500V585.500H1240.500V619.500H1254V655.500H1240.500V689.500H1254V734.500H1219V747.500H1182.500V734.500H1148.500V747.500H1112.500V734.500H1077V689.500H1091V655.500H1077V619.500H1091V585.500H1077Z" />
      <path d="M1255 663.500H1268V628.500H1312V614.500H1348V628.500H1382.500V614.500H1418.500V628.500H1462.500V663.500H1475.500V699.500H1462.500V734.500H1418.500V747.500H1382.500V734.500H1348V747.500H1312V734.500H1268V699.500H1255ZM1387.500 659.500H1409V702.500H1387.500Z" />
      <path d="M501.500 614.500V664M501.500 698V747M1077.300 540.500V585M1077.300 620V655M1077.300 690V734" stroke="#000" strokeWidth="1.400" />
    </g>
    <g fill="none" stroke="#1c1c1c" strokeDasharray="4 2">
      <path d="M323 613.500H899M899 526.500H1278M1254 613.500H1477M323 779.500H1477" />
      <path d="M322.500 613.500V779M500.500 613.500V779M502 613.500V779M677.500 613.500V779M679.500 613.500V779M899 526V779M900.500 613.500V779M1053.500 526V779M1253.500 613.500V779M1476.500 613.500V779" />
      <path d="M1077.800 526V779M1277.800 526V779" strokeWidth="1.500" opacity=".75" />
    </g>
    <g fontFamily="DejaVu Sans, sans-serif" fontSize="19.500" fill="#060606" letterSpacing="0">
      {labels.map(([t, x, w]) => <text key={t} x={x} y="777" textLength={w} lengthAdjust="spacingAndGlyphs">{t}</text>)}
    </g>
  </svg>
);

const SubButtons = () => (
  <CtlRow><Btn $w={14} $h={14}><Min /></Btn><Btn $w={14} $h={14}><Max /></Btn><Btn $w={14} $h={14}><Cls /></Btn></CtlRow>
);
const CloseBadge = ({ fill, edge }: { fill: string; edge: string }) => (
  <svg width="14" height="14"><rect x="1" y="1" width="12" height="12" rx="2" fill={fill} stroke={edge} strokeWidth="1.500" /><path d="M4.300 4.300l5.400 5.400M9.700 4.300l-5.400 5.400" stroke="#fff" strokeWidth="2" /></svg>
);

export default function App() {
  return (
    <Shell>
      <Global />
      <TitleBar>
        <i />
        <span>FreeCAD 0.18</span>
        <WinCtl><WinButtons color="#b4b4b4" close="#b4b4b4" up={2} /></WinCtl>
      </TitleBar>
      <MenuBar>
        {['Datei', 'Bearbeiten', 'Ansicht', 'Werkzeuge', 'Makro', 'TechDraw', 'Fenster', 'Hilfe'].map(m =>
          m === 'TechDraw' ? <span key={m}>{m}</span> : <span key={m}><u>{m[0]}</u>{m.slice(1)}</span>)}
      </MenuBar>
      <Toolbars>
        <Bar $w={403}>
          <Grip /><Many ks={['neu', 'open', 'save', 'print']} /><Sep /><Many ks={['cut', 'copy', 'paste']} /><Sep />
          <Slot $w={41}>{I.undo}<ArrowGap $w={3}><Tri /></ArrowGap></Slot><Slot $w={43}>{I.redo}<ArrowGap $w={5}><Tri c={LG} /></ArrowGap></Slot>
          <Sep $w={6} /><S k="refresh" /><Sep $w={6} /><S k="what" />
        </Bar>
        <Bar $w={187}>
          <Grip />
          <Combo>
            <svg width="16" height="12"><rect x=".5" y=".5" width="15" height="11" fill="#d2d2d0" stroke="#777" /><circle cx="4.500" cy="4" r="1.500" fill="none" stroke="#555" /><circle cx="8.500" cy="4" r="1.500" fill="none" stroke="#555" /><circle cx="4.500" cy="8.500" r="1.300" fill="none" stroke="#555" /><path d="M9 9.500h5V7" fill="none" stroke="#888" /></svg>
            <span>TechDraw</span>
            <Btn $w={15} $h={18}><Tri s={7} /></Btn>
          </Combo>
        </Bar>
        <Bar $w={391}>
          <Grip /><S k="mag" /><S k="mag" /><Slot $w={43}>{I.cube}<ArrowGap $w={5}><Tri /></ArrowGap></Slot><Sep $w={6} />
          <S k="iso" /><Sep $w={6} />
          <Slot><WireCube f={C1} /></Slot><Slot><WireCube t={C1} /></Slot><Slot><WireCube r={C1} /></Slot><Sep $w={6} />
          <Slot><WireCube k="M7.500 2h15v14.500h-15z" /></Slot><Slot><WireCube k="M1.500 22l6-5.500h15l-6 5.500z" /></Slot><Slot><WireCube k="M1.500 6.500l6-4.500v14.500l-6 5.500z" /></Slot><Sep $w={5} />
          <Slot><Ruler /></Slot>
        </Bar>
        <Bar $w={615} $last>
          <Grip /><S k="part" /><Slot><Folder s={24} /></Slot>
        </Bar>
      </Toolbars>
      <Toolbars>
        <Bar $w={76}><Grip /><Many ks={['newpage', 'ofolder']} /></Bar>
        <Bar $w={262}><Grip /><Many ks={['view', 'group', 'section', 'detail', 'anno', 'draft', 'arch', 'sheet']} /></Bar>
        <Bar $w={107}><Grip /><Many ks={['clip', 'clipp', 'clipm']} /></Bar>
        <Bar $w={262}><Grip /><Many ks={['len', 'hor', 'ver', 'rad', 'dia', 'ang', 'ang3', 'link']} /></Bar>
        <Bar $w={76}><Grip /><Many ks={['svg', 'dxf']} /></Bar>
        <Bar $w={813} $last><Grip /><Many ks={['hatch', 'geoh', 'sym', 'img', 'no']} /></Bar>
      </Toolbars>
      <Body>
        <Dock>
          <DockTitle>
            <span>Combo-Ansicht</span>
            <svg width="9" height="10" viewBox="0 0 9 10" fill="none" stroke="#000"><path d="M3 .8h5.500v4.700h-2M3 .8v2.500M3 1.500h5.500M.6 4h5.400v4.800H.6zM.6 4.700H6" strokeWidth="1.200" /></svg>
            <svg width="8" height="8"><path d="M.5.5l7 7M7.500.5l-7 7" stroke="#000" strokeWidth="1.600" /></svg>
          </DockTitle>
          <TabRow><Tab $w={62} $h={23}>Modell</Tab><Tab $w={78} $h={20}>Aufgaben</Tab></TabRow>
          <Pane>
            <Tree>
              <TreeHead><HeadCell $w={231}>Bezeichnungen &amp; Eigenschaften</HeadCell></TreeHead>
              <TreeLabel>Applikation</TreeLabel>
              {nodes.map(n => (
                <Row key={n.t}>
                  {n.c.split('').map((k, i) => <Cell key={i} $k={k}>{i === n.c.length - 1 && n.x && <Expander $open={n.x === 'o'} />}</Cell>)}
                  <Item $sel={n.sel} $dim={n.dim} $bold={n.bold}>{n.icon}{n.t}</Item>
                </Row>
              ))}
            </Tree>
            <Props>
              <PropTable>
                <TreeHead><HeadCell $w={100}>Eigenschaft</HeadCell><HeadCell $w={178}>Wert</HeadCell></TreeHead>
                <Basis>Basis</Basis>
                <PropRow $h={22} $bg="#f6f5f3"><PropKey><Cell $k="t"><Expander /></Cell><span>Placement</span></PropKey><PropVal>[(0,00 0,00 1,00); 0,00 °; (0,00...</PropVal></PropRow>
                <PropRow $h={21}><PropKey><Cell $k="l" /><span>Label</span></PropKey><PropVal>bottom</PropVal></PropRow>
              </PropTable>
              <VScroll $w={16}><Btn $w={16} $h={16}><Tri d="up" s={7} /></Btn><Btn $w={16} $h={36} /><Spacer $n={1} /><Btn $w={16} $h={16}><Tri s={7} /></Btn></VScroll>
            </Props>
            <BottomTabs><BTab $w={65} $h={22}>Ansicht</BTab><BTab $w={57} $h={24} $on>Daten</BTab></BottomTabs>
          </Pane>
        </Dock>
        <Mdi>
          <Area>
            <SubWin $x={5} $y={2} $w={464} $h={375}>
              <SubTitle $h={18}><FcLogo /><span>box_with_heart : 1*</span><SubButtons /></SubTitle>
              <Scene />
            </SubWin>
            <SubWin $x={1} $y={379} $w={1228} $h={328}>
              <SubTitle $h={19}><PageIcon /><span>LaserCutterExport</span><SubButtons /></SubTitle>
              <PageView>
                <Canvas><Drawing /></Canvas>
                <VScroll $w={16}><Btn $w={16} $h={16}><Tri d="up" s={7} /></Btn><Spacer $n={82} /><Btn $w={16} $h={105} /><Spacer $n={65} /><Btn $w={16} $h={16}><Tri s={7} /></Btn></VScroll>
              </PageView>
              <HScroll><Btn $w={16} $h={16}><Tri d="left" s={7} /></Btn><Spacer $n={389} /><Btn $w={404} $h={16} /><Spacer $n={376} /><Btn $w={16} $h={16}><Tri d="right" s={7} /></Btn></HScroll>
            </SubWin>
            <Dialog>
              <DialogTitle><span>Create Lasercutte...</span><WinButtons color="#9b9b9b" close="#9bb67a" up={4} /></DialogTitle>
              <DialogBody>
                <Field>Laser beam width [mm]:<Spin><span>0,20</span><Col><Btn $w={16} $h={9}><Tri d="up" s={4} /></Btn><Btn $w={16} $h={10}><Tri s={4} /></Btn></Col></Spin></Field>
                <Hint>Select one or more parts in your design.<br />Then press the button.</Hint>
                <PushButton>Create Lasercutter Template</PushButton>
              </DialogBody>
            </Dialog>
          </Area>
          <MdiTabs>
            <BTab $w={169} $h={23} $on><FcLogo /><span>box_with_heart : 1*</span><CloseBadge fill="#e2714f" edge="#c5452c" /></BTab>
            <BTab $w={167} $h={21} $gap={5}><PageIcon /><span>LaserCutterExport</span><CloseBadge fill="#bab8b4" edge="#a5a39f" /></BTab>
          </MdiTabs>
        </Mdi>
      </Body>
    </Shell>
  );
}
